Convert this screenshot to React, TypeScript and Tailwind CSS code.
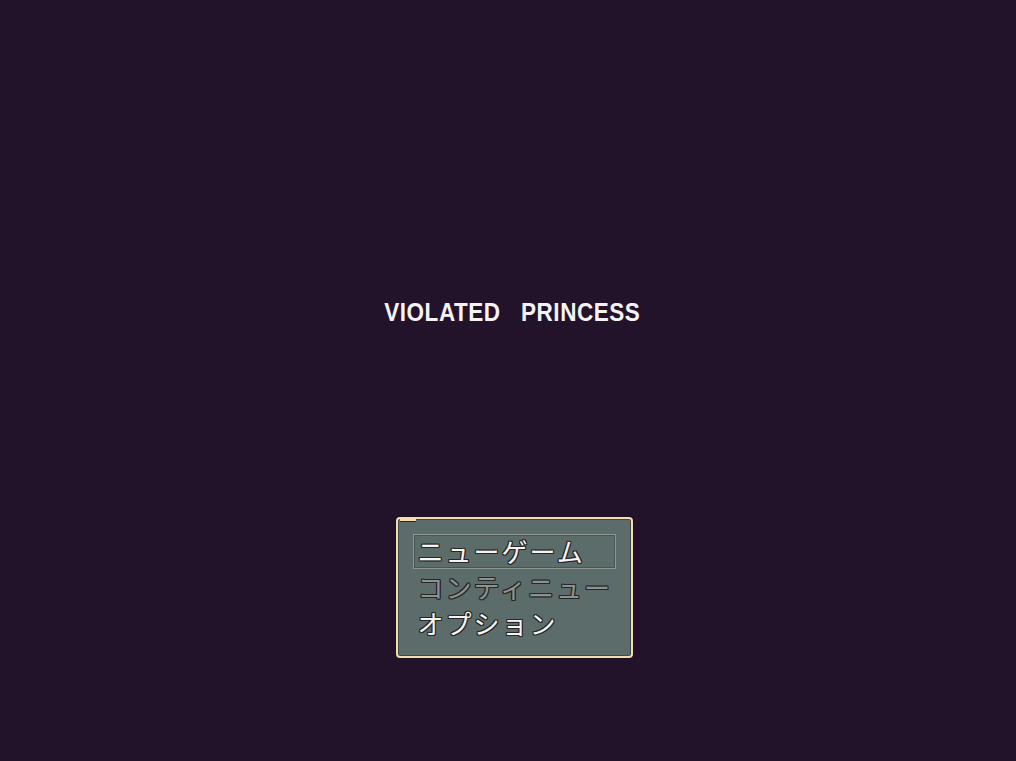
export default function App() {
  const outline =
    "[text-shadow:1px_0_0_#262626,-1px_0_0_#262626,0_1px_0_#262626,0_-1px_0_#262626,1px_1px_0_#262626,-1px_-1px_0_#262626,1px_-1px_0_#262626,-1px_1px_0_#262626]";
  return (
    <div className="w-[1016px] h-[761px] bg-[#22132b] flex flex-col items-center overflow-hidden">
      <div className="mt-[298px] ml-[8px] text-[25px] leading-[28px] font-bold tracking-[0.6px] text-[#f4f2f4] whitespace-pre font-['Liberation_Sans',sans-serif] [transform:scaleX(0.9)]">
        VIOLATED   PRINCESS
      </div>
      <div className="mt-[191px] ml-[12px] relative w-[237px] h-[141px] rounded-[4px] border-[2.5px] border-[#f6dcae] bg-[#5b6c6a] shadow-[0_0_0_1px_#1a1020,inset_0_0_0_1px_#3e4a49] px-[15px] pt-[15px]">
        <div className="absolute left-[2px] top-0 w-[16px] h-[3px] border-t-2 border-[#f6dcae] border-b border-b-[#2a2a2a]" />
        <div className="flex flex-col font-['Noto_Sans_CJK_JP',sans-serif] font-normal text-[26px] leading-[36px] tracking-[2px]">
          <div className="relative w-[203px] h-[35px]">
            <div className="absolute inset-0 border border-[#8f9690] shadow-[inset_0_0_0_1px_#4a5553]" />
            <div className={`relative pl-[5px] leading-[34px] text-[#f4f4f4] ${outline}`}>ニューゲーム</div>
          </div>
          <div className={`pl-[5px] text-[#8d9291] ${outline}`}>コンティニュー</div>
          <div className={`pl-[5px] text-[#f4f4f4] ${outline}`}>オプション</div>
        </div>
      </div>
    </div>
  );
}
